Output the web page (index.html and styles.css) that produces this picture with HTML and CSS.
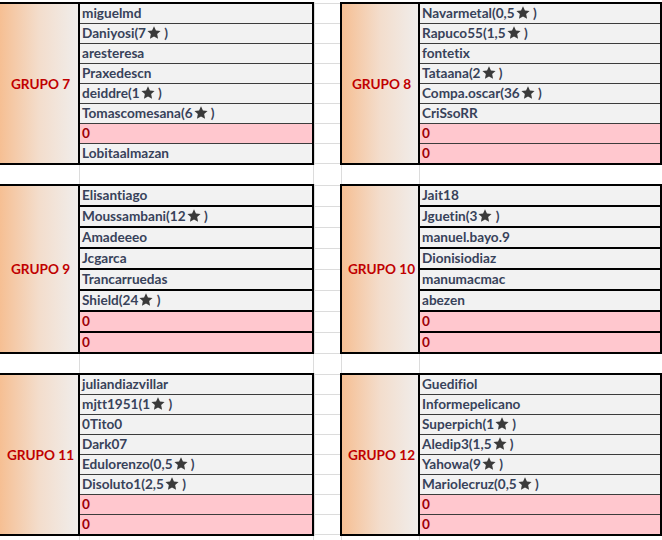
FILE: index.html
```html
<!DOCTYPE html>
<html lang="es">
<head>
<meta charset="utf-8">
<title>Grupos</title>
<link rel="stylesheet" href="styles.css">
</head>
<body>
<svg width="0" height="0" class="defs" aria-hidden="true">
  <symbol id="star" viewBox="0 0 24 23.5"><path d="M12 .3L15.53 7.95L23.89 8.94L17.71 14.65L19.35 22.91L12 18.8L4.65 22.91L6.29 14.65L.11 8.94L8.47 7.95Z"/></symbol>
</svg>
<div class="sheet">

  <div class="band">
    <div class="block block--left">
      <div class="name">GRUPO 7</div>
      <div class="list">
        <div class="cell">miguelmd</div>
        <div class="cell">Daniyosi(7<svg class="star"><use href="#star"/></svg> )</div>
        <div class="cell">aresteresa</div>
        <div class="cell">Praxedescn</div>
        <div class="cell">deiddre(1<svg class="star"><use href="#star"/></svg> )</div>
        <div class="cell">Tomascomesana(6<svg class="star"><use href="#star"/></svg> )</div>
        <div class="cell cell--bad">0</div>
        <div class="cell">Lobitaalmazan</div>
      </div>
    </div>
    <div class="gutter">
      <div class="gcell"></div><div class="gcell"></div><div class="gcell"></div><div class="gcell"></div>
      <div class="gcell"></div><div class="gcell"></div><div class="gcell"></div><div class="gcell"></div>
    </div>
    <div class="block block--right">
      <div class="name">GRUPO 8</div>
      <div class="list">
        <div class="cell">Navarmetal(0,5<svg class="star"><use href="#star"/></svg> )</div>
        <div class="cell">Rapuco55(1,5<svg class="star"><use href="#star"/></svg> )</div>
        <div class="cell">fontetix</div>
        <div class="cell">Tataana(2<svg class="star"><use href="#star"/></svg> )</div>
        <div class="cell">Compa.oscar(36<svg class="star"><use href="#star"/></svg> )</div>
        <div class="cell">CriSsoRR</div>
        <div class="cell cell--bad">0</div>
        <div class="cell cell--bad">0</div>
      </div>
    </div>
  </div>

  <div class="spacer"><span></span><span></span><span></span><span></span><span></span></div>

  <div class="band band--bold">
    <div class="block block--left">
      <div class="name">GRUPO 9</div>
      <div class="list">
        <div class="cell">Elisantiago</div>
        <div class="cell">Moussambani(12<svg class="star"><use href="#star"/></svg> )</div>
        <div class="cell">Amadeeeo</div>
        <div class="cell">Jcgarca</div>
        <div class="cell">Trancarruedas</div>
        <div class="cell">Shield(24<svg class="star"><use href="#star"/></svg> )</div>
        <div class="cell cell--bad">0</div>
        <div class="cell cell--bad">0</div>
      </div>
    </div>
    <div class="gutter">
      <div class="gcell"></div><div class="gcell"></div><div class="gcell"></div><div class="gcell"></div>
      <div class="gcell"></div><div class="gcell"></div><div class="gcell"></div><div class="gcell"></div>
    </div>
    <div class="block block--right">
      <div class="name">GRUPO 10</div>
      <div class="list">
        <div class="cell">Jait18</div>
        <div class="cell">Jguetin(3<svg class="star"><use href="#star"/></svg> )</div>
        <div class="cell">manuel.bayo.9</div>
        <div class="cell">Dionisiodiaz</div>
        <div class="cell">manumacmac</div>
        <div class="cell">abezen</div>
        <div class="cell cell--bad">0</div>
        <div class="cell cell--bad">0</div>
      </div>
    </div>
  </div>

  <div class="spacer"><span></span><span></span><span></span><span></span><span></span></div>

  <div class="band">
    <div class="block block--left">
      <div class="name">GRUPO 11</div>
      <div class="list">
        <div class="cell">juliandiazvillar</div>
        <div class="cell">mjtt1951(1<svg class="star"><use href="#star"/></svg> )</div>
        <div class="cell">0Tito0</div>
        <div class="cell">Dark07</div>
        <div class="cell">Edulorenzo(0,5<svg class="star"><use href="#star"/></svg> )</div>
        <div class="cell">Disoluto1(2,5<svg class="star"><use href="#star"/></svg> )</div>
        <div class="cell cell--bad">0</div>
        <div class="cell cell--bad">0</div>
      </div>
    </div>
    <div class="gutter">
      <div class="gcell"></div><div class="gcell"></div><div class="gcell"></div><div class="gcell"></div>
      <div class="gcell"></div><div class="gcell"></div><div class="gcell"></div><div class="gcell"></div>
    </div>
    <div class="block block--right">
      <div class="name">GRUPO 12</div>
      <div class="list">
        <div class="cell">Guedifiol</div>
        <div class="cell">Informepelicano</div>
        <div class="cell">Superpich(1<svg class="star"><use href="#star"/></svg> )</div>
        <div class="cell">Aledip3(1,5<svg class="star"><use href="#star"/></svg> )</div>
        <div class="cell">Yahowa(9<svg class="star"><use href="#star"/></svg> )</div>
        <div class="cell">Mariolecruz(0,5<svg class="star"><use href="#star"/></svg> )</div>
        <div class="cell cell--bad">0</div>
        <div class="cell cell--bad">0</div>
      </div>
    </div>
  </div>

  <div class="spacer"><span></span><span></span><span></span><span></span><span></span></div>
</div>
</body>
</html>
```
FILE: styles.css
```css
* {
  box-sizing: border-box;
  margin: 0;
  padding: 0;
}

html, body {
  background: #ffffff;
  overflow: hidden;
}

body {
  font-family: Lato, "Liberation Sans", sans-serif;
  font-size: 13.6px;
  font-weight: 700;
  font-variant-ligatures: none;
  font-feature-settings: "liga" 0, "clig" 0, "dlig" 0;
}

.defs {
  position: absolute;
}

.sheet {
  width: 662px;
  padding-top: 2px;
}

.band {
  display: flex;
}

.block {
  display: flex;
  border-top: 2px solid #000;
  border-bottom: 2px solid #000;
  border-right: 2px solid #000;
}

.block--right {
  border-left: 2px solid #000;
}

.name {
  display: flex;
  align-items: center;
  justify-content: center;
  padding-left: 3px;
  background: linear-gradient(90deg, #f6bf93 0%, #f3ddcc 50%, #f0edeb 100%);
  border-right: 2px solid #000;
  color: #c00000;
  font-size: 13.6px;
  white-space: nowrap;
}

.block--left .name {
  width: 80px;
}

.block--right .name {
  width: 78px;
}

.list {
  display: flex;
  flex-direction: column;
}

.block--left .list {
  width: 232px;
}

.block--right .list {
  width: 240px;
}

.cell {
  box-sizing: content-box;
  height: 19px;
  line-height: 19px;
  padding-left: 2px;
  background: #f2f2f2;
  color: #38425a;
  white-space: nowrap;
}

.cell + .cell {
  border-top: 1px solid #3c3c3c;
}

.band--bold .cell + .cell {
  border-top: 2px solid #000;
}

.cell--bad {
  background: #ffc7ce;
  color: #9c0006;
}

.star {
  width: 14px;
  height: 13px;
  fill: #3a3a3a;
  vertical-align: -1px;
  margin-left: 1px;
}

.gutter {
  width: 26px;
  display: flex;
  flex-direction: column;
  padding-top: 1px;
  border-left: 1px solid #dcdcdc;
}

.gcell {
  box-sizing: content-box;
  height: 19px;
  border-top: 1px solid #dcdcdc;
}

.gcell:last-child {
  border-bottom: 1px solid #dcdcdc;
}

.band--bold .gcell {
  height: 20px;
}

.spacer {
  display: flex;
  height: 19px;
}

.spacer span {
  border-right: 1px solid #dcdcdc;
}

.spacer span:nth-child(1) { width: 80px; }
.spacer span:nth-child(2) { width: 234px; }
.spacer span:nth-child(3) { width: 28px; }
.spacer span:nth-child(4) { width: 78px; }
.spacer span:nth-child(5) { flex: 1; border-right: none; }
```
